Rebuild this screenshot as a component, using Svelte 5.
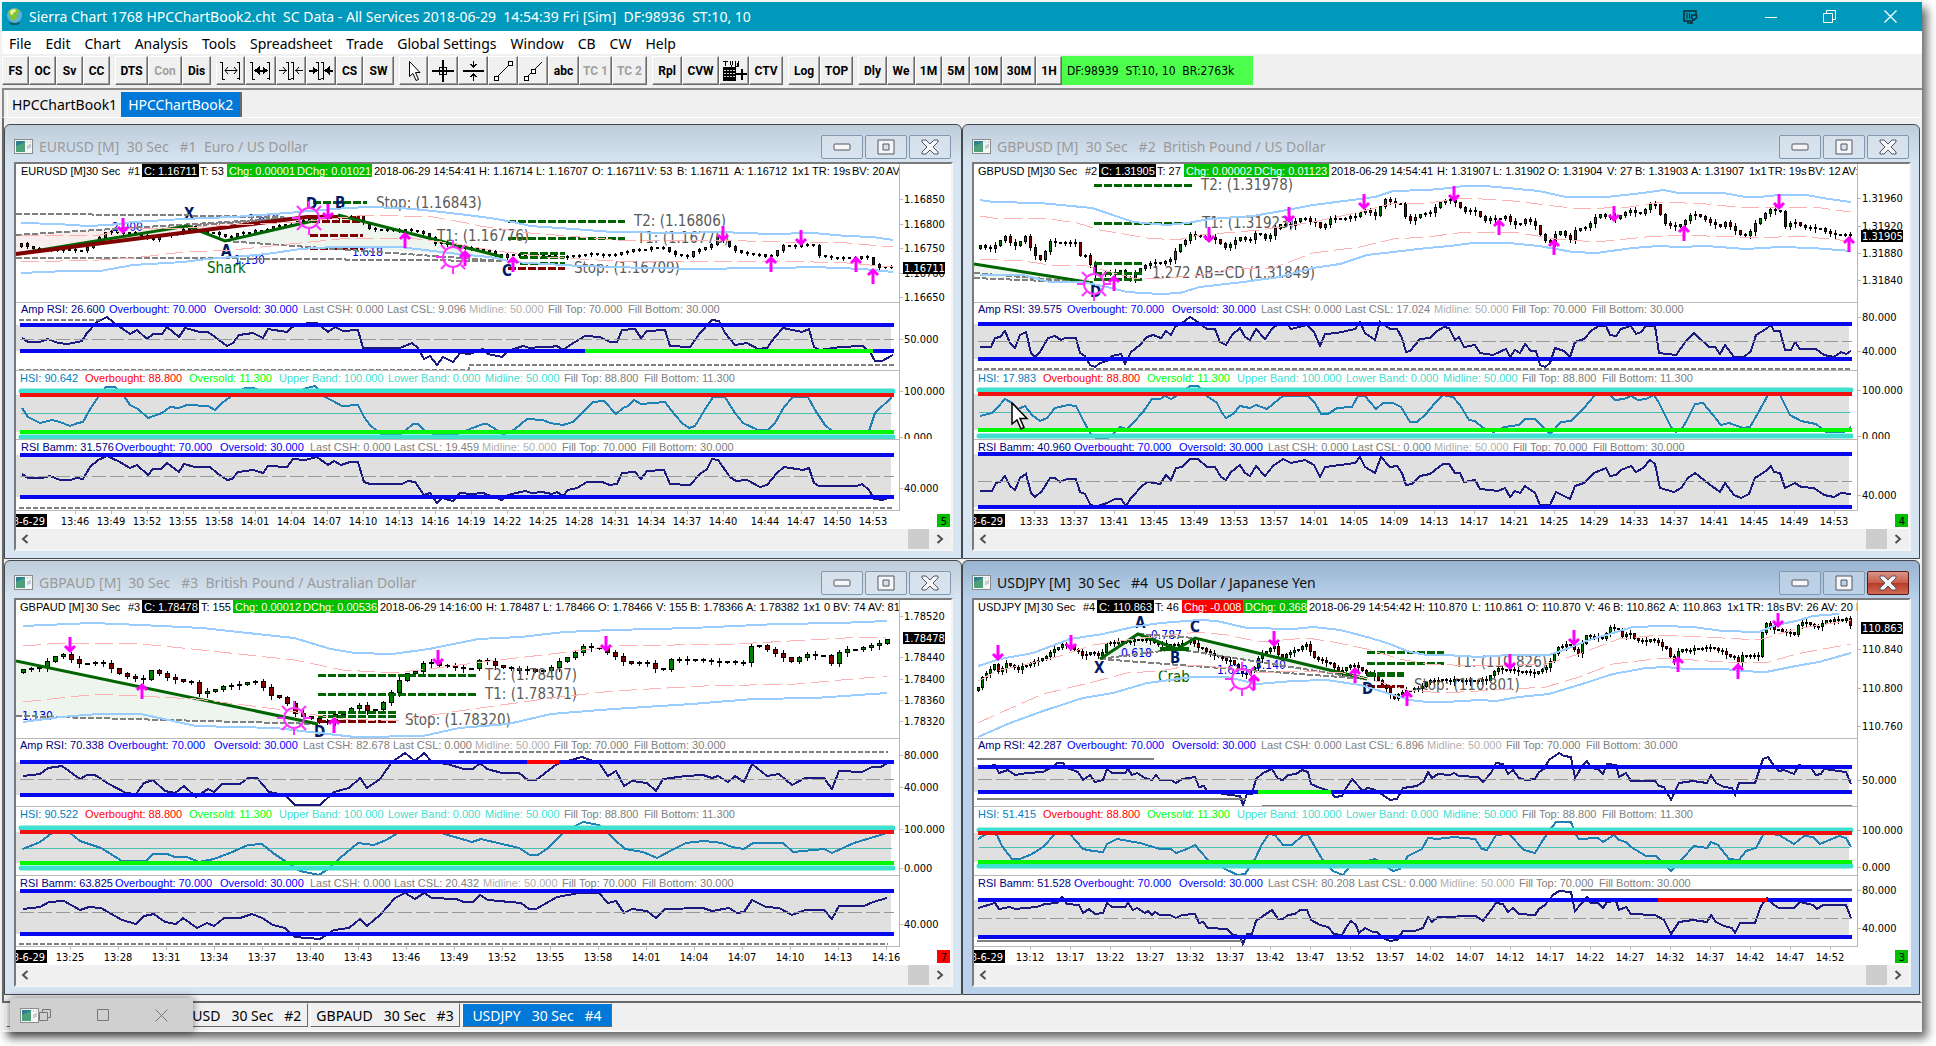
<script lang="ts">
  type Pt = [number, number];

  const menu = ['File', 'Edit', 'Chart', 'Analysis', 'Tools', 'Spreadsheet', 'Trade', 'Global Settings', 'Window', 'CB', 'CW', 'Help'];

  const toolbar = [
    [{ t: 'FS', w: 27 }, { t: 'OC', w: 27 }, { t: 'Sv', w: 27 }, { t: 'CC', w: 27 }],
    [{ t: 'DTS', w: 33 }, { t: 'Con', w: 34, off: true }, { t: 'Dis', w: 29 }],
    [{ icon: 'widen', w: 29 }, { icon: 'widen-bold', w: 31 }, { icon: 'narrow', w: 30 }, { icon: 'narrow-bold', w: 30 }, { t: 'CS', w: 27 }, { t: 'SW', w: 31 }],
    [{ icon: 'pointer', w: 29 }, { icon: 'cross', w: 30 }, { icon: 'hline', w: 30 }, { icon: 'line', w: 30 }, { icon: 'ray', w: 30 }, { t: 'abc', w: 31 }, { t: 'TC 1', w: 33, off: true }, { t: 'TC 2', w: 35, off: true }],
    [{ t: 'Rpl', w: 30 }, { t: 'CVW', w: 37 }, { icon: 'tvw', w: 30 }, { t: 'CTV', w: 34 }],
    [{ t: 'Log', w: 32 }, { t: 'TOP', w: 33 }],
    [{ t: 'Dly', w: 29 }, { t: 'We', w: 28 }, { t: '1M', w: 27 }, { t: '5M', w: 28 }, { t: '10M', w: 32 }, { t: '30M', w: 34 }, { t: '1H', w: 26 }],
  ];

  const NAVY = '#000080';
  const BLUE = '#0000ff';
  const GRAY = '#808080';
  const PALE = '#b0b0b0';
  const TURQ = '#40e0d0';
  const rsiColors = [NAVY, BLUE, BLUE, GRAY, GRAY, PALE, GRAY, GRAY];
  const hsiColors = ['#0080c0', '#ff0000', '#00ff00', TURQ, TURQ, TURQ, GRAY, GRAY];

  const rsi = (name: string, csh: string, csl: string) => [
    name, 'Overbought: 70.000', 'Oversold: 30.000', `Last CSH: ${csh}`, `Last CSL: ${csl}`, 'Midline: 50.000', 'Fill Top: 70.000', 'Fill Bottom: 30.000',
  ];
  const hsi = (v: string) => [
    `HSI: ${v}`, 'Overbought: 88.800', 'Oversold: 11.300', 'Upper Band: 100.000', 'Lower Band: 0.000', 'Midline: 50.000', 'Fill Top: 88.800', 'Fill Bottom: 11.300',
  ];
  const hsiX = [4, 69, 173, 263, 372, 469, 548, 628];

  // top and bottom of the three oscillator panels
  const panelY: Pt[] = [[138, 206], [206, 275], [275, 346]];

  // minutes after midnight -> HH:MM
  const hhmm = (m: number) => `${Math.floor(m / 60)}:${String(m % 60).padStart(2, '0')}`;
  const times = (x: number, dx: number, start: number, dm: number, n: number) =>
    Array.from({ length: n }, (_, i) => ({ x: x + i * dx, t: hhmm(start + i * dm) }));

  const parse = (s: string): Pt[] => s.trim().split(/\s+/).map((p) => p.split(',').map(Number) as Pt);

  function at(pts: Pt[], x: number) {
    for (let i = 1; i < pts.length; i++) {
      const [x0, y0] = pts[i - 1];
      const [x1, y1] = pts[i];
      if (x <= x1) return y0 + ((y1 - y0) * (x - x0)) / (x1 - x0 || 1);
    }
    return pts[pts.length - 1][1];
  }

  // one candle per bar, walking along the close line
  function candles(s: string, step: number) {
    const pts = parse(s);
    const out = [];
    const tall = step === 6 ? 2 : 4;
    let prev = pts[0][1] + 2;
    for (let x = pts[0][0], i = 0; x <= 877; x += step, i++) {
      const jitter = ((i * 37) % 7) - 3;
      const close = Math.round(at(pts, x) + jitter / 4);
      const top = Math.min(prev, close);
      const h = Math.abs(prev - close);
      out.push({
        x, top, h: Math.max(h, 1),
        hi: top - ((i * 13) % tall) - 1,
        lo: top + h + ((i * 29) % tall) + 1,
        fill: h < 2 ? '#000' : close < prev ? '#008000' : '#800000',
      });
      prev = close;
    }
    return out;
  }

  const charts = [
    {
      sym: 'EURUSD', n: 1, name: 'Euro / US Dollar', active: false, num: '5', numBg: '#00c000', step: 6,
      head: [[5, 'EURUSD [M]'], [70, '30 Sec'], [112, '#1'], [184, 'T: 53'], [358, '2018-06-29 14:54:41'], [463, 'H: 1.16714'], [520, 'L: 1.16707'], [576, 'O: 1.16711'], [631, 'V: 53'], [661, 'B: 1.16711'], [718, 'A: 1.16712'], [776, '1x1'], [796, 'TR: 19s'], [836, 'BV: 20'], [870, 'AV']],
      boxes: [[126, 57, '#000', 'C: 1.16711'], [211, 69, '#00c000', 'Chg: 0.00001'], [279, 77, '#00c000', 'DChg: 0.01021']],
      cur: [104, '1.16711'],
      axis: [[35, '1.16850'], [60, '1.16800'], [84, '1.16750'], [109, '1.16700'], [133, '1.16650']],
      low: [[175, '50.000'], [227, '100.000'], [273, '0.000'], [324, '40.000']],
      times: [...times(59, 36, 826, 3, 19), ...times(749, 36, 884, 3, 4)],
      upper: '5,59 41,60 71,62 94,61 117,58 167,55 217,53 271,49 317,45 351,43 384,44 417,47 451,51 474,54 497,58 514,62 557,65 597,68 664,69 704,68 754,70 797,69 831,72 857,73 877,76',
      lower: '5,109 51,107 84,107 117,101 167,98 191,95 217,93 251,90 284,85 317,83 351,83 384,83 417,87 451,91 474,93 497,98 564,102 631,104 691,105 731,104 764,104 797,103 847,105 877,108',
      pinkUp: '5,71 84,71 117,64 167,64 217,61 284,58 351,51 417,53 451,59 464,62 514,69 564,73 614,77 697,76 764,78 831,79 877,83',
      pinkLow: '5,98 84,96 117,94 167,88 217,86 284,79 334,74 401,75 434,79 481,87 531,93 597,97 664,98 764,97 831,99 877,103',
      price: '5,81 17,85 47,87 64,86 72,84 79,76 91,68 107,69 124,71 136,77 144,71 157,71 171,63 184,68 197,69 214,74 224,69 244,67 261,63 274,60 291,56 317,53 346,54 348,64 364,66 401,67 409,71 419,79 444,84 464,86 474,89 484,93 497,91 517,91 547,94 574,90 597,92 607,88 631,85 651,84 656,91 671,92 694,81 702,73 709,79 721,89 737,90 751,94 759,89 767,82 784,82 797,81 801,93 824,94 851,94 859,103 877,103',
      fills: [['0,90 291,53 0,71', '#f8eeee'], ['209,77 301,56 322,51 487,93', '#eef5ee']],
      shapes: [['0,90 171,62 209,77 301,56', '#006400', 3], ['322,51 487,93', '#006400', 3], ['0,90 291,53 322,53', '#800000', 4]],
      grays: ['0,50 150,51 291,54', '0,71 291,53', '171,62 291,53', '0,94 170,94 487,97', '209,77 487,97'],
      dashes: [[297, 351, 38, 'g'], [296, 348, 53, 'r'], [296, 348, 57, 'r'], [294, 347, 71, 'r'], [294, 347, 84, 'r'], [492, 609, 57, 'g'], [492, 609, 74, 'g'], [504, 549, 89, 'g'], [504, 549, 93, 'g'], [504, 549, 99, 'g'], [492, 549, 104, 'r']],
      labels: [[360, 44, 'Stop: (1.16843)'], [421, 77, 'T1: (1.16776)'], [618, 62, 'T2: (1.16806)'], [621, 79, 'T1: (1.16770)'], [558, 109, 'Stop: (1.16709)']],
      fibs: [[96, 67, '2.000'], [232, 59, '1.618'], [218, 100, '1.130'], [336, 92, '1.618']],
      pattern: [191, 109, 'Shark'],
      letters: [[168, 55, 'X'], [205, 92, 'A'], [290, 45, 'D'], [319, 44, 'B'], [486, 112, 'C']],
      suns: [[293, 54], [437, 93]],
      down: [[107, 69], [312, 55], [707, 77], [785, 81]],
      up: [[389, 69], [449, 87], [497, 93], [755, 93], [840, 93], [857, 105]],
      panels: [
        {
          top: 161, bot: 187, mid: 175, label: rsi('Amp RSI: 26.600', '0.000', '9.096'), lx: [5, 93, 198, 287, 371, 453, 532, 612],
          marks: [[569, 857, 187, '#00ff00']], steps: ['3,156 84,156', '3,206 453,206 453,201 878,201'], solid: false,
          trace: '6,174 12,178 24,178 32,175 42,179 52,180 66,177 71,169 81,158 91,153 97,158 114,170 121,166 131,175 137,170 146,170 151,163 163,173 169,164 184,168 192,168 199,173 211,182 217,179 223,171 237,169 247,174 252,165 271,168 276,163 292,159 301,159 312,168 319,163 327,167 342,166 347,184 384,184 396,179 402,184 408,195 414,192 421,201 427,193 437,198 444,189 454,190 467,185 472,190 486,193 492,187 507,182 514,184 524,183 534,183 541,182 547,186 554,181 569,172 584,173 594,178 601,178 606,166 619,165 625,174 631,167 649,166 654,182 674,183 684,169 696,156 703,157 709,169 719,181 731,179 742,185 751,184 759,173 767,164 786,168 793,165 798,183 804,186 824,183 847,182 854,188 859,197 866,197 877,191',
        },
        {
          hsi: true, top: 231, bot: 268, mid: 249, hi: 227, lo: 273, label: hsi('90.642'), lx: hsiX, marks: [], steps: [], solid: false,
          trace: '6,244 12,253 24,259 36,256 44,258 54,262 62,259 67,258 76,242 83,232 90,223 99,223 108,232 114,241 122,245 132,254 146,249 154,243 163,244 171,241 192,242 199,246 206,239 214,233 229,224 237,224 250,228 280,228 291,224 299,222 309,233 317,237 326,242 342,241 348,253 354,261 361,267 366,271 384,271 390,266 397,260 402,260 409,267 420,271 442,270 454,265 467,260 471,260 481,266 487,271 499,265 511,255 527,256 534,259 547,261 557,258 567,248 577,238 588,237 600,250 607,244 612,242 618,236 625,240 649,238 655,246 666,259 673,264 679,262 688,247 697,233 709,233 719,249 727,259 742,266 752,266 759,259 768,243 777,233 792,233 799,246 809,261 816,267 853,267 859,249 876,233',
        },
        {
          top: 291, bot: 333, mid: 312, label: rsi('RSI Bamm: 31.576', '0.000', '19.459'), lx: [5, 99, 204, 294, 378, 466, 546, 626], marks: [], steps: ['3,344 878,344'], solid: false,
          trace: '6,310 12,314 26,314 34,312 44,316 54,316 61,314 67,315 74,303 82,296 91,292 102,297 114,304 121,301 132,311 137,305 145,305 151,299 163,308 168,300 179,303 194,303 201,309 211,316 216,315 222,308 237,306 247,309 252,302 271,303 277,295 289,296 301,293 312,301 318,297 325,301 334,298 342,298 348,318 354,320 386,320 392,317 399,318 408,331 414,329 421,339 426,334 437,337 444,329 456,330 467,329 486,336 492,331 509,327 516,329 526,328 536,330 541,328 547,332 552,326 561,324 571,318 586,318 594,321 601,320 606,309 619,308 625,315 631,307 648,306 654,320 674,321 684,310 691,305 696,295 702,296 714,313 720,317 731,316 744,323 751,321 761,309 768,303 787,306 793,304 798,319 803,322 841,322 846,320 853,326 858,335 867,336 877,332',
        },
      ],
    },
    {
      sym: 'GBPUSD', n: 2, name: 'British Pound / US Dollar', active: false, num: '4', numBg: '#00c000', step: 5, cursor: true,
      head: [[4, 'GBPUSD [M]'], [69, '30 Sec'], [111, '#2'], [183, 'T: 27'], [357, '2018-06-29 14:54:41'], [463, 'H: 1.31907'], [519, 'L: 1.31902'], [574, 'O: 1.31904'], [633, 'V: 27'], [661, 'B: 1.31903'], [717, 'A: 1.31907'], [775, '1x1'], [794, 'TR: 19s'], [834, 'BV: 12'], [868, 'AV:']],
      boxes: [[125, 57, '#000', 'C: 1.31905'], [210, 69, '#00c000', 'Chg: 0.00002'], [278, 77, '#00c000', 'DChg: 0.01123']],
      cur: [72, '1.31905'],
      axis: [[34, '1.31960'], [62, '1.31920'], [89, '1.31880'], [116, '1.31840']],
      low: [[153, '80.000'], [187, '40.000'], [226, '100.000'], [272, '0.000'], [331, '40.000']],
      times: times(60, 40, 813, 4, 21),
      upper: '6,36 19,38 66,39 118,44 136,50 159,58 193,61 213,59 236,55 279,52 313,46 339,41 386,35 401,33 419,27 453,26 476,24 489,22 512,22 565,27 592,33 632,33 669,29 689,26 705,29 749,29 772,33 785,33 805,31 832,31 855,35 877,38',
      lower: '6,111 49,111 76,118 109,118 133,123 153,128 186,130 206,129 226,123 269,118 306,113 339,104 366,100 393,91 419,88 453,84 476,82 499,79 535,79 565,82 599,88 622,89 659,84 685,82 705,83 732,82 772,85 805,83 839,84 877,87',
      pinkUp: '6,52 19,54 69,54 103,59 126,66 173,74 203,76 226,71 286,66 339,58 386,48 419,39 453,39 492,34 539,37 605,45 655,43 689,38 732,40 772,44 805,43 839,43 877,48',
      pinkLow: '6,95 49,97 76,101 109,101 133,107 159,114 193,114 226,111 263,104 299,104 339,89 386,83 419,75 453,73 492,68 539,68 582,75 622,78 672,73 705,71 789,74 822,72 877,77',
      price: '6,83 16,85 31,73 41,83 53,71 58,91 66,96 76,79 103,79 106,91 114,94 118,108 123,111 146,108 153,118 159,111 168,104 176,99 186,100 198,94 203,84 216,72 234,74 244,77 251,85 266,73 274,79 281,69 293,76 303,61 316,61 329,54 339,58 348,66 353,56 383,53 388,46 403,53 408,35 426,41 433,58 446,51 458,48 466,39 476,35 480,39 492,48 502,48 509,56 532,54 539,62 552,56 564,63 567,76 579,79 582,66 597,76 600,68 612,63 625,51 642,55 652,47 669,50 675,41 685,41 687,60 705,63 719,49 745,64 752,58 765,71 775,71 782,58 795,46 809,48 811,64 820,58 830,64 842,64 855,70 877,72',
      fills: [['0,100 119,119 0,114', '#eef5ee']],
      shapes: [['0,100 119,119', '#006400', 3]],
      grays: ['0,109 119,119', '0,114 119,119'],
      dashes: [[120, 218, 21, 'g'], [120, 218, 59, 'g'], [120, 168, 99, 'g'], [120, 168, 109, 'g'], [120, 168, 115, 'g']],
      labels: [[227, 26, 'T2: (1.31978)'], [228, 64, 'T1: (1.31923)'], [178, 114, '1.272 AB=CD (1.31849)']],
      fibs: [], pattern: null,
      letters: [[116, 133, 'D']],
      suns: [[120, 120]],
      down: [[235, 78], [315, 58], [390, 45], [480, 37], [640, 57], [805, 45]],
      up: [[140, 112], [525, 56], [580, 76], [710, 62], [875, 73]],
      panels: [
        {
          top: 160, bot: 195, mid: 177, label: rsi('Amp RSI: 39.575', '0.000', '17.024'), lx: [4, 93, 198, 287, 371, 460, 538, 618], marks: [], steps: ['3,205 878,205'], solid: false,
          trace: '6,183 17,183 21,174 26,173 31,167 36,179 41,184 46,171 52,168 57,189 61,193 66,188 74,174 81,172 87,176 91,174 102,174 106,189 111,192 116,201 121,203 126,199 133,197 138,192 147,190 151,200 157,188 166,181 173,173 179,171 187,174 192,167 197,171 201,163 208,159 216,153 224,158 233,165 241,165 246,178 252,181 258,171 266,164 271,173 276,176 282,165 291,175 298,165 304,160 313,160 317,165 333,161 340,168 346,182 351,170 363,169 381,165 386,158 391,169 401,176 406,158 416,165 423,165 428,174 432,188 436,187 446,175 456,174 463,167 470,163 475,164 481,176 485,173 490,183 501,181 506,189 519,191 532,185 536,193 541,186 546,189 551,180 557,187 562,187 566,201 571,203 576,199 581,184 590,187 596,193 601,178 610,175 618,166 625,162 632,162 636,171 642,172 647,165 657,162 662,170 667,168 672,162 681,162 685,189 702,191 712,177 720,169 735,183 741,183 746,190 751,181 760,193 770,193 777,187 782,171 792,165 797,161 800,167 806,167 811,186 817,186 821,178 826,185 842,185 850,191 860,193 867,188 872,190 877,187',
        },
        {
          hsi: true, top: 230, bot: 266, mid: 248, hi: 226, lo: 272, label: hsi('17.983'), lx: hsiX, marks: [], steps: [], solid: false,
          trace: '6,252 18,249 24,243 31,235 38,239 44,245 51,242 58,251 66,257 73,254 81,244 94,241 102,242 108,254 116,269 123,275 133,275 141,268 146,263 153,265 159,259 169,248 178,235 186,235 191,232 197,235 204,231 216,222 224,222 233,232 243,239 248,249 252,254 259,250 266,242 276,244 282,241 293,245 299,240 309,232 334,232 341,239 347,250 354,250 363,244 378,243 384,232 391,232 402,245 409,239 419,239 427,243 436,258 443,258 451,251 461,239 469,231 479,233 486,241 495,256 501,257 509,264 520,268 530,263 545,261 551,255 561,255 569,263 576,270 587,258 597,257 610,244 621,231 636,231 641,236 650,235 657,232 664,236 672,235 680,231 685,239 697,263 702,268 707,266 712,258 721,240 729,239 739,251 747,261 755,259 769,264 776,263 784,249 794,231 806,231 816,251 827,257 842,260 852,268 870,268 877,263',
        },
        {
          top: 290, bot: 343, mid: 317, label: rsi('RSI Bamm: 40.960', '0.000', '0.000'), lx: [4, 100, 205, 294, 378, 460, 539, 619], marks: [], steps: [], solid: false,
          trace: '6,327 18,327 22,319 26,318 31,312 36,322 41,326 46,314 52,310 57,329 61,333 68,327 76,314 81,314 86,318 93,315 102,315 106,328 111,330 116,340 121,343 133,339 141,335 147,335 152,342 157,334 169,321 174,318 186,320 192,311 197,316 202,304 208,303 216,295 224,295 233,303 241,303 247,313 252,316 257,308 266,301 271,309 276,312 282,302 291,312 299,302 309,295 317,299 331,296 340,301 346,313 351,303 381,299 386,293 391,303 401,309 407,293 416,303 423,302 428,309 432,321 438,320 446,312 456,310 469,300 475,300 481,309 486,309 490,318 501,316 506,325 524,327 531,324 536,333 541,327 546,329 551,322 561,329 566,341 576,341 582,328 596,335 601,322 610,319 620,309 632,304 636,312 642,311 647,306 657,302 662,308 669,304 676,296 681,300 686,324 700,328 707,324 714,314 721,309 735,320 746,328 751,319 760,331 767,334 775,330 781,314 792,307 797,302 800,308 806,309 811,324 821,319 827,323 840,324 850,331 860,333 867,329 877,330',
        },
      ],
    },
    {
      sym: 'GBPAUD', n: 3, name: 'British Pound / Australian Dollar', active: false, num: '7', numBg: '#ff0000', step: 8,
      head: [[4, 'GBPAUD [M]'], [70, '30 Sec'], [112, '#3'], [185, 'T: 155'], [364, '2018-06-29 14:16:00'], [470, 'H: 1.78487'], [527, 'L: 1.78466'], [582, 'O: 1.78466'], [640, 'V: 155'], [674, 'B: 1.78366'], [730, 'A: 1.78382'], [787, '1x1'], [808, '0'], [817, 'BV: 74'], [852, 'AV: 81']],
      boxes: [[126, 57, '#000', 'C: 1.78478'], [217, 69, '#00c000', 'Chg: 0.00012'], [285, 77, '#00c000', 'DChg: 0.00536']],
      cur: [38, '1.78478'],
      axis: [[16, '1.78520'], [57, '1.78440'], [79, '1.78400'], [100, '1.78360'], [121, '1.78320']],
      low: [[155, '80.000'], [187, '40.000'], [229, '100.000'], [268, '0.000'], [324, '40.000']],
      times: times(54, 48, 805, 3, 18),
      upper: '7,26 76,23 125,25 186,28 241,34 278,38 315,49 339,53 376,54 413,49 462,39 505,37 548,32 597,30 676,28 762,24 823,23 871,21',
      lower: '7,122 45,117 82,114 125,114 180,126 260,128 303,133 339,137 407,136 443,128 492,124 535,114 597,109 676,104 737,99 799,98 871,93',
      pinkUp: '7,46 45,43 125,44 186,50 241,56 278,60 327,70 376,73 413,69 474,61 535,54 597,46 719,44 829,38 871,37',
      pinkLow: '7,102 82,94 180,99 260,109 327,119 376,121 443,111 535,98 597,91 688,86 780,84 871,76',
      price: '7,71 24,68 33,59 48,55 64,65 85,62 100,73 125,82 137,69 152,79 174,82 183,94 204,88 241,82 253,94 269,101 281,116 309,123 318,116 342,106 355,114 373,96 388,74 400,73 410,61 425,66 440,68 456,70 465,59 486,68 511,71 523,73 541,64 566,48 587,49 596,56 609,63 633,64 644,73 655,60 731,63 736,44 759,53 774,63 786,56 811,56 818,68 824,51 848,49 866,43 871,39',
      fills: [['0,61 302,124 0,116', '#eef5ee']],
      shapes: [['0,61 302,124', '#006400', 3]],
      grays: ['0,116 302,124'],
      dashes: [[302, 460, 75, 'g'], [302, 460, 94, 'g'], [302, 380, 112, 'g'], [302, 380, 116, 'g'], [302, 380, 121, 'r']],
      labels: [[469, 80, 'T2: (1.78407)'], [469, 99, 'T1: (1.78371)'], [389, 125, 'Stop: (1.78320)']],
      fibs: [[6, 120, '1.130']], pattern: null,
      letters: [[298, 137, 'D']],
      suns: [[278, 118]],
      down: [[54, 52], [422, 65], [590, 51]],
      up: [[126, 84], [318, 118]],
      panels: [
        {
          top: 162, bot: 195, mid: 179, label: rsi('Amp RSI: 70.338', '82.678', '0.000'), lx: [4, 92, 198, 287, 377, 459, 538, 618], marks: [[511, 543, 162, '#ff0000']], steps: ['443,152 872,152'], solid: false,
          trace: '7,176 24,174 32,168 46,166 64,179 71,175 79,175 93,184 110,193 120,194 128,183 137,180 149,191 159,193 168,186 180,197 192,189 198,192 206,184 224,184 232,178 241,178 253,192 269,195 279,205 304,205 318,192 333,188 344,178 351,188 364,179 376,162 389,153 399,161 408,153 416,162 431,164 448,169 457,169 464,163 471,169 486,173 503,173 512,180 520,180 541,164 566,157 583,163 592,176 600,171 608,186 616,181 631,183 640,191 647,179 670,176 687,175 696,178 702,176 712,182 719,176 728,182 736,164 751,176 763,174 776,185 789,178 808,178 816,189 823,171 846,172 856,167 865,167 871,163',
        },
        {
          hsi: true, top: 232, bot: 263, mid: 248, hi: 228, lo: 268, label: hsi('90.522'), lx: hsiX, marks: [], steps: [], solid: false,
          trace: '7,249 24,242 36,233 54,233 64,241 85,248 106,261 130,261 137,254 151,254 159,257 171,257 183,262 198,259 214,253 232,245 246,244 257,253 272,263 284,271 303,275 312,269 324,258 342,243 358,245 370,240 382,233 425,233 456,242 465,239 486,244 503,248 514,255 522,255 532,248 548,232 567,222 583,225 598,239 609,249 627,252 641,258 658,249 670,243 688,241 706,243 716,247 728,249 737,243 767,243 777,252 808,249 816,253 838,243 871,233',
        },
        {
          top: 291, bot: 334, mid: 312, label: rsi('RSI Bamm: 63.825', '0.000', '20.432'), lx: [4, 99, 204, 294, 378, 467, 546, 626], marks: [], steps: ['3,344 872,344'], solid: false,
          trace: '7,309 24,307 33,302 48,301 64,310 73,307 85,308 106,320 120,324 128,316 138,314 149,322 160,324 167,318 181,328 191,323 198,326 208,318 224,318 236,314 246,318 257,325 269,328 279,337 304,339 318,330 333,328 344,319 351,326 364,315 379,298 389,293 399,299 408,293 416,298 440,299 448,302 457,302 464,295 472,300 505,303 513,309 520,309 541,297 563,293 583,293 592,303 600,301 608,313 616,309 631,311 640,318 649,309 687,308 696,311 713,308 721,313 728,312 736,300 750,307 763,308 776,315 789,310 808,310 816,319 823,306 848,306 857,302 871,298',
        },
      ],
    },
    {
      sym: 'USDJPY', n: 4, name: 'US Dollar / Japanese Yen', active: true, num: '3', numBg: '#00c000', step: 4,
      head: [[4, 'USDJPY [M]'], [67, '30 Sec'], [109, '#4'], [181, 'T: 46'], [335, '2018-06-29 14:54:42'], [440, 'H: 110.870'], [498, 'L: 110.861'], [553, 'O: 110.870'], [611, 'V: 46'], [639, 'B: 110.862'], [695, 'A: 110.863'], [753, '1x1'], [772, 'TR: 18s'], [812, 'BV: 26'], [847, 'AV: 20 I']],
      boxes: [[123, 57, '#000', 'C: 110.863'], [208, 61, '#ff0000', 'Chg: -0.008'], [269, 64, '#00c000', 'DChg: 0.368']],
      cur: [28, '110.863'],
      axis: [[49, '110.840'], [88, '110.800'], [126, '110.760']],
      low: [[180, '50.000'], [230, '100.000'], [267, '0.000'], [290, '80.000'], [328, '40.000']],
      times: times(56, 40, 792, 5, 21),
      upper: '4,66 26,59 59,53 96,39 129,34 159,27 186,23 226,20 243,21 273,28 319,29 339,27 366,30 393,37 413,43 436,52 453,55 472,55 505,57 535,55 575,55 595,48 615,40 639,33 659,27 689,26 719,27 749,31 785,32 802,25 822,21 839,16 865,14',
      lower: '4,137 36,123 69,111 109,98 139,93 173,83 219,77 253,77 283,84 319,81 353,80 386,85 416,94 436,100 453,102 472,102 505,100 522,101 545,97 575,94 605,85 639,74 672,68 692,67 712,69 752,69 765,71 792,72 822,66 845,62 877,53',
      pinkUp: '4,81 23,71 53,64 86,56 119,45 153,40 186,36 226,32 253,35 286,42 333,38 359,42 393,49 426,59 453,64 505,66 539,65 572,64 605,54 645,39 685,35 749,38 785,40 822,29 877,20',
      pinkLow: '4,123 19,116 69,94 119,82 153,73 186,71 219,65 253,68 286,73 319,71 369,73 406,82 433,90 469,93 539,89 572,87 605,77 639,64 689,58 749,62 792,63 822,54 877,44',
      price: '4,89 6,81 14,71 23,63 24,72 33,64 43,70 53,65 66,60 73,56 81,49 89,45 99,48 109,57 114,53 126,56 133,43 146,43 156,41 168,39 183,44 203,46 216,41 229,51 243,57 258,63 271,76 281,66 286,56 299,46 306,59 319,51 333,45 339,58 356,64 366,73 378,64 393,74 399,76 409,86 419,99 431,91 444,89 456,81 466,80 472,81 512,81 522,69 542,71 562,74 572,68 585,46 599,46 602,58 612,36 629,39 635,28 644,29 647,38 655,33 662,41 682,41 692,49 699,63 705,51 739,48 759,58 764,63 767,56 784,56 787,36 792,24 800,29 822,36 825,21 844,28 852,21 872,20 877,28',
      fills: [['126,59 164,34 203,49', '#eef5ee'], ['203,49 221,38 393,79', '#eef5ee']],
      shapes: [['126,59 164,34 203,49 221,38 393,79', '#006400', 3], ['186,49 215,49', '#006400', 4]],
      grays: ['126,59 203,49', '164,34 221,38', '126,59 393,79', '203,49 393,79'],
      dashes: [[393, 470, 52, 'g'], [393, 470, 63, 'g'], [393, 430, 73, 'g'], [393, 430, 75, 'g'], [393, 430, 86, 'r']],
      labels: [[481, 67, 'T1: (110.826)'], [440, 90, 'Stop: (110.801)']],
      fibs: [[177, 39, '0.787'], [147, 57, '0.618'], [243, 74, '1.618'], [281, 69, '3.140']],
      pattern: [184, 82, 'Crab'],
      letters: [[161, 28, 'A'], [216, 32, 'C'], [120, 73, 'X'], [196, 63, 'B'], [388, 94, 'D']],
      suns: [[268, 79]],
      down: [[24, 60], [97, 50], [300, 46], [536, 69], [600, 45], [804, 27]],
      up: [[280, 75], [381, 68], [433, 91], [704, 57], [764, 64]],
      panels: [
        {
          top: 167, bot: 192, mid: 179, label: rsi('Amp RSI: 42.287', '0.000', '6.896'), lx: [4, 93, 198, 287, 371, 453, 532, 612], marks: [[284, 357, 192, '#00ff00']], steps: ['3,159 180,159', '3,199 272,199', '288,206 878,206'], solid: true,
          trace: '4,168 21,165 25,173 34,170 41,175 53,173 69,172 78,167 83,163 89,163 93,168 104,172 109,180 116,175 121,182 129,180 133,169 138,173 151,173 154,169 158,175 163,173 171,178 178,180 182,175 186,180 197,180 202,183 208,179 221,177 225,187 230,186 233,191 256,195 266,196 269,205 273,194 278,194 282,179 289,173 298,169 304,179 309,180 314,175 322,174 328,170 334,172 337,184 346,188 356,191 361,197 368,196 371,190 378,179 389,191 393,188 399,189 409,195 416,200 423,199 429,188 443,186 450,181 454,172 458,178 464,174 476,175 480,173 485,176 504,177 509,182 517,173 522,163 529,164 534,174 539,170 545,178 552,180 561,179 565,172 570,169 575,160 585,153 590,156 597,157 601,178 609,165 613,161 617,168 624,169 629,174 633,164 642,165 645,177 652,173 657,181 681,181 685,186 690,187 697,200 705,183 719,181 733,183 737,175 742,183 750,187 758,188 761,195 765,183 781,183 789,159 794,157 800,166 805,171 810,170 820,174 825,165 837,168 842,175 847,174 850,169 872,172 877,184',
        },
        {
          hsi: true, top: 233, bot: 262, mid: 247, hi: 230, lo: 266, label: hsi('51.415'), lx: hsiX, marks: [], steps: [], solid: false,
          trace: '4,239 14,233 23,235 28,246 38,259 46,259 58,254 69,247 81,234 96,234 109,249 119,251 129,252 133,244 143,239 166,243 186,249 197,249 202,253 213,249 221,245 226,251 234,260 253,270 264,275 271,274 281,259 288,244 295,234 301,235 309,245 318,245 329,235 334,235 348,259 359,271 369,275 376,266 401,259 419,271 426,269 434,256 448,249 454,238 463,239 480,237 501,239 508,249 513,250 522,235 535,234 550,250 561,253 567,243 575,231 582,222 597,222 602,235 605,239 624,238 629,242 640,235 645,240 652,242 657,247 672,256 682,256 689,263 697,271 709,258 720,246 733,248 737,242 744,245 755,259 765,260 772,251 782,248 790,233 805,235 820,244 830,236 839,237 846,244 865,236 872,238 877,247',
        },
        {
          top: 300, bot: 337, mid: 318, label: rsi('RSI Bamm: 51.528', '80.208', '0.000'), lx: [4, 100, 205, 294, 384, 466, 545, 625], marks: [[684, 793, 300, '#ff0000']], steps: ['3,341 268,341', '607,290 878,290'], solid: true,
          trace: '4,308 21,303 25,309 36,307 41,309 63,307 71,304 83,303 88,297 93,304 105,305 109,313 115,309 121,314 129,313 133,303 138,307 151,307 154,303 159,310 163,308 171,313 174,311 178,315 181,312 186,315 196,315 202,318 208,315 221,314 225,323 229,322 234,328 253,329 259,335 266,336 269,344 273,334 278,334 282,321 289,316 298,310 304,319 309,319 314,315 321,314 326,310 333,310 337,320 346,325 354,327 360,334 368,335 373,326 377,321 382,325 385,333 391,328 399,332 403,332 409,338 416,341 423,340 429,331 441,331 449,328 454,317 458,322 464,317 502,316 509,321 517,310 522,303 529,304 534,312 539,308 545,314 561,315 565,309 571,305 579,295 585,291 597,292 601,311 607,304 613,297 617,303 624,303 629,308 633,302 642,301 645,310 652,307 657,314 681,315 690,320 697,334 705,322 719,320 733,322 737,315 742,322 750,326 758,328 761,333 766,323 781,323 787,306 793,298 800,305 805,308 820,308 826,302 839,305 843,309 849,305 872,305 877,318',
        },
      ],
    },
  ];

  const rays = [0, 45, 90, 135, 180, 225, 270, 315];
</script>

{#snippet toolIcon(name: string)}
  <svg class="tool-icon" width="26" height="26" viewBox="0 0 26 26" fill="none" stroke="#000" stroke-width="1" shape-rendering="crispEdges">
    {#if name === 'widen' || name === 'widen-bold'}
      <path d="M2 4.5h3M4.5 4v18M4 21.5h3M19 4.5h3M21.5 4v18M19 20.5h3" />
      <path d="M7 12.5h12" stroke-width={name === 'widen' ? 1 : 2} />
      {#if name === 'widen'}
        <path d="M10 9l-3 3.500 3 3.500M16 9l3 3.500-3 3.500" shape-rendering="auto" />
      {:else}
        <path d="M11 9v7l-4-3.500zM15 9v7l4-3.500z" fill="#000" />
      {/if}
    {:else if name === 'narrow' || name === 'narrow-bold'}
      <path d="M8 4.500h3M10.500 4v18M10 21.500h3M13 4.500h3M15.500 4v18M13 20.500h3" />
      <path d="M1 12.500h8M17 12.500h8" stroke-width={name === 'narrow' ? 1 : 2} />
      {#if name === 'narrow'}
        <path d="M5 9l3 3.500-3 3.500M21 9l-3 3.500 3 3.500" shape-rendering="auto" />
      {:else}
        <path d="M5 9v7l4-3.500zM21 9v7l-4-3.500z" fill="#000" />
      {/if}
    {:else if name === 'pointer'}
      <path d="M8.500 3.500v15l3.500-3 3 7 2.500-1-3-7h4.500z" fill="#fff" shape-rendering="auto" />
    {:else if name === 'cross'}
      <path d="M13 2v22M2 13h22" stroke-width="2" />
      <path d="M9.500 9.500h7v7h-7z" />
    {:else if name === 'hline'}
      <path d="M3 12.500h21" stroke-width="2" />
      <path d="M13.500 3v6M13.500 16v7M10.500 6l3 3 3-3M10.500 19l3-3 3 3" />
    {:else if name === 'line'}
      <path d="M6 20L20 6" shape-rendering="auto" />
      <path d="M4.500 18.500h4v4h-4zM18.500 3.500h4v4h-4z" fill="#fff" />
    {:else if name === 'ray'}
      <path d="M6 20L22 4" shape-rendering="auto" />
      <path d="M4.500 18.500h4v4h-4zM11.500 11.500h4v4h-4z" fill="#fff" />
    {:else if name === 'tvw'}
      <path d="M2 3.500h5M4.500 3v5M9.500 3v3l1 2 1-2v-3M14.500 3v5h3v-5M16.500 5v3" />
      <path d="M2 9h13v14H2z" fill="#000" stroke="none" />
      <path d="M3 12.500h11M3 15.500h11M3 18.500h11" stroke="#ccc" stroke-dasharray="2 1" />
      <path d="M15 16h11M20.500 11v11" stroke-width="2" />
    {/if}
  </svg>
{/snippet}

{#snippet winIcon()}
  <svg width="19" height="15" viewBox="0 0 19 15">
    <rect x="0.5" y="0.5" width="18" height="14" fill="#f4f6f8" stroke="#8c8c8c" />
    <rect x="2" y="2" width="9" height="11" fill="#2f7f8f" />
    <path d="M2 13V7l9-4v10z" fill="#4ea07a" />
    <path d="M13 3h1M16 3h1M14 6v4M16 5v4" stroke="#9aa8b4" />
  </svg>
{/snippet}

<div class="app">
  <header class="titlebar">
    <svg class="globe" width="17" height="19" viewBox="0 0 17 19">
      <ellipse cx="8.5" cy="16" rx="5" ry="2" fill="#0b5d70" />
      <circle cx="8.500" cy="8.500" r="7.500" fill="#5db0d8" />
      <path d="M2 5c3-4 8-4 11-2 1 2-2 3-2 6s-3 5-5 4-1-4-3-5z" fill="#7fc62c" />
      <path d="M4 4c2-2 5-2 6-1s-2 2-3 4-3 1-3-3z" fill="#e9f49a" />
    </svg>
    <h1>Sierra Chart 1768 HPCChartBook2.cht  SC Data - All Services 2018-06-29  14:54:39 Fri [Sim]  DF:98936  ST:10, 10</h1>
    <div class="caption">
      <svg width="15" height="16" viewBox="0 0 15 16" fill="none" stroke="#0b2a33" stroke-width="1.500">
        <path d="M13 5V2H1v10h9M4 14h6" />
        <path d="M4 4v6M6.500 4v6" stroke-width="1" />
        <path d="M8.500 6h5v3l-2.500 2-2.500-2z" fill="#0099bc" />
      </svg>
      <button aria-label="Minimize"><svg width="12" height="12" viewBox="0 0 12 12"><path d="M0 6.500h12" stroke="#fff" /></svg></button>
      <button aria-label="Restore"><svg width="13" height="13" viewBox="0 0 13 13" fill="none" stroke="#fff"><path d="M.5 3.500h9v9h-9zM3.500 3V.5h9v9H10" /></svg></button>
      <button aria-label="Close"><svg width="13" height="13" viewBox="0 0 13 13"><path d="M.5.5l12 12M12.500.5l-12 12" stroke="#fff" stroke-width="1.300" /></svg></button>
    </div>
  </header>

  <nav class="menu">
    {#each menu as item}
      <button>{item}</button>
    {/each}
  </nav>

  <div class="toolbar">
    {#each toolbar as group, g}
      <div class="group">
        {#each group as b}
          <button class="tool" style:width="{b.w}px" disabled={b.off} aria-label={b.icon}>
            {#if b.icon}{@render toolIcon(b.icon)}{:else}{b.t}{/if}
          </button>
        {/each}
        {#if g === toolbar.length - 1}
          <div class="feed">DF:98939  ST:10, 10  BR:2763k</div>
        {/if}
      </div>
    {/each}
  </div>

  <div class="books">
    <button class="book">HPCChartBook1</button>
    <button class="book selected">HPCChartBook2</button>
  </div>

  <main class="desk">
    {#each charts as c, ci}
      <section class="win" class:active={c.active}>
        <div class="win-title">
          {@render winIcon()}
          <h2>{c.sym} [M]  30 Sec   #{c.n}  {c.name}</h2>
          <button aria-label="Minimize"><svg width="18" height="8" viewBox="0 0 18 8"><rect x="1" y="1" width="16" height="6" rx="1" fill="#f6f6f6" stroke="#535666" /></svg></button>
          <button aria-label="Maximize">
            <svg width="18" height="16" viewBox="0 0 18 16"><path d="M1 1h16v14H1zM6 5v6h6V5z" fill="#f6f6f6" fill-rule="evenodd" stroke="#535666" /></svg>
          </button>
          <button class="close" aria-label="Close">
            <svg width="18" height="16" viewBox="0 0 18 16"><path d="M1 1h4l4 4 4-4h4v2l-5 5 5 5v2h-4l-4-4-4 4H1v-2l5-5-5-5z" fill="#f6f6f6" stroke="#535666" /></svg>
          </button>
        </div>
        <div class="client">
          <svg class="plot" viewBox="0 0 935 365" preserveAspectRatio="xMinYMin meet" role="img" aria-label="{c.sym} chart">
            <defs>
              <clipPath id="price{ci}"><rect width="883" height="138" /></clipPath>
              {#each panelY as [y0, y1], pi}
                <clipPath id="panel{ci}{pi}"><rect y={y0} width="935" height={y1 - y0} /></clipPath>
              {/each}
            </defs>

            <g clip-path="url(#price{ci})">
              {#each c.fills as [pts, fill]}
                <polygon points={pts} {fill} />
              {/each}
              <g class="crisp">
                {#each candles(c.price, c.step) as k}
                  <path d="M{k.x + 0.5} {k.hi}V{k.lo}" stroke="#000" />
                  <rect x={k.x - Math.floor(c.step / 4) + 0.5} y={k.top - 0.5} width={Math.floor(c.step / 4) * 2} height={k.h} fill={k.fill} stroke="#000" />
                {/each}
              </g>
              {#each c.dashes as [x1, x2, y, kind]}
                <path class="target" d="M{x1} {Number(y) + 0.5}H{x2}" stroke={kind === 'g' ? '#006400' : '#800000'} />
              {/each}
              {#each c.labels as [x, y, t]}
                <text class="big" {x} {y}>{t}</text>
              {/each}
              {#each c.fibs as [x, y, t]}
                <text class="fib" {x} {y}>{t}</text>
              {/each}
              {#if c.pattern}
                <text class="big pattern" x={c.pattern[0]} y={c.pattern[1]}>{c.pattern[2]}</text>
              {/if}
              {#each c.letters as [x, y, t]}
                <text class="letter" {x} {y}>{t}</text>
              {/each}
              {#each c.grays as pts}
                <polyline class="ratio" points={pts} />
              {/each}
              {#each c.shapes as [pts, stroke, width]}
                <polyline points={pts} fill="none" {stroke} stroke-width={width} />
              {/each}
              <polyline class="inner" points={c.pinkUp} />
              <polyline class="inner" points={c.pinkLow} />
              <polyline class="outer" points={c.upper} />
              <polyline class="outer" points={c.lower} />
              {#each c.suns as [x, y]}
                <g class="sun" transform="translate({x} {y})">
                  <circle r="10" />
                  {#each rays as a}
                    <path d="M0 11V17" transform="rotate({a})" />
                  {/each}
                </g>
              {/each}
              {#each c.down as [x, y]}
                <path class="signal" d="M{x} {y - 15}V{y - 2}M{x - 5} {y - 6}l5 5 5-5" />
              {/each}
              {#each c.up as [x, y]}
                <path class="signal" d="M{x} {y + 15}V{y + 2}M{x - 5} {y + 6}l5-5 5 5" />
              {/each}
            </g>

            <rect class="head-bg" width="883" height="13" />
            <g class="legend" clip-path="url(#price{ci})">
              {#each c.boxes as [x, w, fill, t]}
                <rect {x} width={w} height="13" {fill} />
                <text x={Number(x) + 2} y="11" fill="#fff">{t}</text>
              {/each}
              {#each c.head as [x, t]}
                <text {x} y="11">{t}</text>
              {/each}
            </g>

            {#each c.panels as p, pi}
              <g clip-path="url(#panel{ci}{pi})">
                <rect y={p.top} width="875" height={p.bot - p.top} fill="#e0e0e0" />
                {#if p.hsi}
                  <path class="crisp" d="M5 {p.mid + 0.5}H876" stroke="#48c0b0" />
                {/if}
                <polyline class="osc" class:hsi={p.hsi} points={p.trace} />
                {#if !p.hsi}
                  <path class="mid" d="M4 {p.mid + 0.5}H878" />
                {/if}
                {#each p.steps as pts}
                  <polyline class="swing" class:solid={p.solid} points={pts} />
                {/each}
                {#if p.hsi}
                  <path d="M5 {p.hi}H877M5 {p.lo}H877" stroke={TURQ} stroke-width="5" stroke-linecap="round" />
                  <path class="crisp" d="M4 {p.top}H878" stroke="#f01010" stroke-width="4" />
                  <path class="crisp" d="M4 {p.bot}H878" stroke="#00f800" stroke-width="4" />
                {:else}
                  <path class="crisp" d="M4 {p.top}H878M4 {p.bot}H878" stroke="#0808f0" stroke-width="4" />
                {/if}
                {#each p.marks as [x1, x2, y, stroke]}
                  <path class="crisp" d="M{x1} {y}H{x2}" {stroke} stroke-width="4" />
                {/each}
                {#each p.label as t, i}
                  <text class="legend" x={p.lx[i]} y={[149, 218, 287][pi]} fill={(p.hsi ? hsiColors : rsiColors)[i]}>{t}</text>
                {/each}
                {#each c.low.filter(([y]) => Number(y) > panelY[pi][0] && Number(y) < panelY[pi][1]) as [y, t]}
                  <text x="888" y={Number(y) + 4}>{t}</text>
                {/each}
              </g>
            {/each}

            {#each c.axis as [y, t]}
              <text x="888" y={Number(y) + 4}>{t}</text>
            {/each}
            <path class="rule" d="M883.5 0V346M0 138.5H883M0 206.5H883M0 275.5H883M0 346.5H884" />
            {#each [...c.axis, ...c.low] as [y]}
              <path class="rule" d="M883 {Number(y) + 0.5}h4" />
            {/each}
            <rect x="887" y={Number(c.cur[0]) - 6} width="42" height="12" />
            <text x="888" y={Number(c.cur[0]) + 4} fill="#fff">{c.cur[1]}</text>

            {#each c.times as { x, t }}
              <path class="rule" d="M{x + 0.5} 346v4" />
              <text {x} y="361" text-anchor="middle">{t}</text>
            {/each}
            <rect y="350" width="31" height="13" />
            <text x="29" y="361" text-anchor="end" fill="#fff">8-6-29</text>
            <rect x="921" y="350" width="13" height="13" fill={c.numBg} />
            <text x="928" y="361" text-anchor="middle">{c.num}</text>

            {#if c.cursor}
              <path d="M38 239v21l5-4 4 9 3-1.500-4-9h7z" fill="#fff" stroke="#000" stroke-width="1.500" />
            {/if}
          </svg>
          <div class="scroll">
            <button aria-label="Scroll left"><svg width="8" height="10" viewBox="0 0 8 10"><path d="M6.500 1L2 5l4.500 4" /></svg></button>
            <div class="track"></div>
            <div class="thumb"></div>
            <button aria-label="Scroll right"><svg width="8" height="10" viewBox="0 0 8 10"><path d="M1.500 1L6 5 1.500 9" /></svg></button>
          </div>
        </div>
      </section>
    {/each}
  </main>

  <footer class="chart-tabs">
    {#each charts as c}
      <button class="chart-tab" class:selected={c.active}>{c.sym}   30 Sec   #{c.n}</button>
    {/each}
    <div class="mini">
      {@render winIcon()}
      <button aria-label="Restore"><svg width="12" height="12" viewBox="0 0 12 12" fill="none" stroke="#777"><path d="M.5 3.500h8v8h-8zM3.500 3V.5h8v8H9" /></svg></button>
      <button aria-label="Maximize"><svg width="12" height="12" viewBox="0 0 12 12" fill="none" stroke="#777"><path d="M.5.5h11v11H.5z" /></svg></button>
      <button aria-label="Close"><svg width="13" height="13" viewBox="0 0 13 13"><path d="M.5.5l12 12M12.500.5l-12 12" stroke="#777" /></svg></button>
    </div>
  </footer>
</div>

<style>
:global(body) {
  margin: 0;
  background: #fff;
}
* {
  box-sizing: border-box;
}
button {
  margin: 0;
  padding: 0;
  border: 0;
  background: none;
  font: inherit;
  color: inherit;
}
h1, h2 {
  margin: 0;
  font-size: inherit;
  font-weight: 400;
  white-space: pre;
}
.app {
  margin: 2px 14px 14px 2px;
  background: #f0f0f0;
  font-family: "Noto Sans", "Open Sans", sans-serif;
  font-size: 14px;
  color: #000;
  box-shadow: 5px 6px 9px rgba(0, 0, 0, 0.6);
}

.titlebar {
  display: flex;
  align-items: center;
  height: 29px;
  padding-left: 4px;
  background: #0099bc;
  color: #fff;
}
.globe {
  margin-right: 6px;
}
.caption {
  display: flex;
  align-items: center;
  margin-left: auto;
}
.caption > svg {
  margin-right: 44px;
}
.caption button {
  display: flex;
  align-items: center;
  justify-content: center;
  width: 58px;
  height: 29px;
}
.caption button:last-child {
  width: 64px;
}

.menu {
  display: flex;
  gap: 14px;
  height: 23px;
  padding: 1px 0 0 7px;
  background: #fff;
}

.toolbar {
  display: flex;
  gap: 5px;
  height: 36px;
  padding-top: 2px;
  border-bottom: 2px solid #8a8a8a;
}
.group {
  display: flex;
}
.tool {
  display: flex;
  align-items: center;
  justify-content: center;
  height: 29px;
  border: 1px solid;
  border-color: #fff #696969 #696969 #fff;
  box-shadow: inset -1px -1px #a0a0a0;
  font-family: Roboto, sans-serif;
  font-size: 12px;
  font-weight: 700;
  white-space: nowrap;
}
.tool:disabled {
  color: #a0a0a0;
}
.tool-icon {
  flex: none;
}
.feed {
  width: 191px;
  height: 29px;
  padding-left: 5px;
  background: #4dff4d;
  font-family: "DejaVu Sans Condensed", "DejaVu Sans", sans-serif;
  font-size: 12px;
  line-height: 30px;
  white-space: pre;
}

.books {
  display: flex;
  height: 28px;
  padding: 2px 0 0 3px;
  border-left: 2px solid #8a8a8a;
  border-bottom: 1px solid #fff;
}
.book {
  padding: 0 4px;
  line-height: 24px;
  border-left: 1px solid #fff;
}
.book.selected {
  padding: 0 7px;
  background: #0078d7;
  color: #fff;
  border-left: 0;
  border-right: 2px solid #696969;
}

.desk {
  display: grid;
  grid-template-columns: 1fr 1fr;
  row-gap: 1px;
  padding: 6px 0;
  border: 0 solid #696969;
  border-width: 0 0 2px 2px;
  border-right: 2px solid #f0f0f0;
}
.win {
  padding: 0 8px 7px 9px;
  background: linear-gradient(#bfcddb, #d7e4f2 38px);
  border: 1px solid #45484d;
  border-radius: 6px 6px 0 0;
}
.win.active {
  background: linear-gradient(#99b4d1, #b9d1ea 38px);
}
.win-title {
  display: flex;
  align-items: center;
  gap: 2px;
  height: 37px;
  padding: 6px 2px 0 0;
  color: #9a9a9a;
}
.win.active .win-title {
  color: #101010;
}
.win-title h2 {
  flex: 1;
  padding-left: 4px;
}
.win-title button {
  display: flex;
  align-items: center;
  justify-content: center;
  width: 42px;
  height: 24px;
  border: 1px solid #8296ae;
  border-radius: 2px;
  background: linear-gradient(rgba(255, 255, 255, 0.3), rgba(255, 255, 255, 0.1));
}
.win.active .close {
  border-color: #5a1a1a;
  background: linear-gradient(#d99585, #c75b48 50%, #b53a28 50%, #cf6a55);
}
.client {
  border: 2px solid;
  border-color: #7a7a7a #f4f4f4 #f4f4f4 #7a7a7a;
  background: #fff;
}

.plot {
  display: block;
  width: 100%;
  height: auto;
  font-family: "DejaVu Sans Condensed", "DejaVu Sans", sans-serif;
  font-size: 11px;
}
.legend {
  font-family: "Liberation Sans", sans-serif;
}
.crisp, .rule, .mid, .swing, .osc, .outer, .inner, .ratio, .target {
  shape-rendering: crispEdges;
  fill: none;
}
.big {
  font-size: 15px;
  fill: #5a5a5a;
}
.big.pattern {
  fill: #006400;
}
.fib {
  font-size: 12px;
  fill: #0000e0;
}
.letter {
  font-size: 15px;
  font-weight: 700;
  fill: #001a66;
}
.target {
  stroke-width: 3px;
  stroke-dasharray: 8 2;
}
.ratio {
  stroke: #808080;
  stroke-width: 2px;
  stroke-dasharray: 6 2;
}
.inner {
  stroke: #ffb0b0;
  stroke-dasharray: 18 6;
}
.outer {
  stroke: #99ccff;
  stroke-width: 2px;
}
.sun {
  fill: none;
  stroke: #ff33ff;
  stroke-width: 2px;
}
.signal {
  fill: none;
  stroke: #ff00ff;
  stroke-width: 3px;
}
.head-bg {
  fill: #fff;
}
.osc {
  stroke: #1a1a80;
  stroke-width: 2px;
}
.osc.hsi {
  stroke: #1e80b4;
}
.mid {
  stroke: #989898;
  stroke-dasharray: 14 4;
}
.swing {
  stroke: #808080;
  stroke-width: 2px;
  stroke-dasharray: 5 2;
}
.swing.solid {
  stroke-dasharray: none;
}
.rule {
  stroke: #b8b8b8;
}

.scroll {
  display: flex;
  height: 20px;
  background: #f0f0f0;
}
.scroll button {
  display: flex;
  align-items: center;
  justify-content: center;
  width: 18px;
}
.scroll button:last-child {
  width: 22px;
}
.scroll svg {
  fill: none;
  stroke: #505050;
  stroke-width: 2px;
}
.track {
  flex: 1;
}
.thumb {
  width: 21px;
  background: #cdcdcd;
}

.chart-tabs {
  position: relative;
  display: flex;
  gap: 2px;
  height: 29px;
  padding: 0 0 3px 4px;
  border-bottom: 2px solid #f8f8f8;
}
.chart-tab {
  width: 150px;
  border: 1px solid;
  border-color: #f0f0f0 #696969 #696969 #fff;
  white-space: pre;
}
.chart-tab.selected {
  background: #0078d7;
  color: #fff;
}
.mini {
  position: absolute;
  left: 8px;
  bottom: -2px;
  display: flex;
  align-items: center;
  width: 183px;
  height: 34px;
  padding-left: 10px;
  background: #d0d0d0;
  box-shadow: 0 0 8px rgba(0, 0, 0, 0.5);
}
.mini button {
  display: flex;
  justify-content: center;
  width: 59px;
}
.mini button:first-of-type {
  width: 12px;
  margin-right: 22px;
}
</style>
